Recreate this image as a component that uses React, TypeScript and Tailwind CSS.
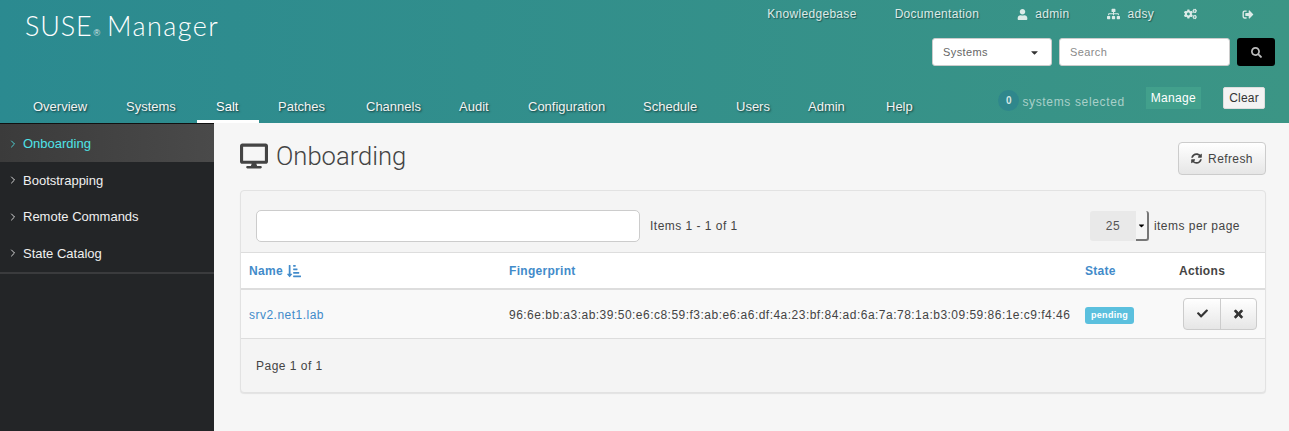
import { FaUser, FaSitemap, FaCogs, FaSignOutAlt, FaSearch, FaSyncAlt, FaCheck, FaTimes, FaDesktop, FaSortAmountDownAlt, FaCaretDown } from "react-icons/fa";
import { LuChevronRight } from "react-icons/lu";

const navItems = [
  { label: "Overview", width: "w-[93px]" },
  { label: "Systems", width: "w-[90px]" },
  { label: "Salt", width: "w-[62px]" },
  { label: "Patches", width: "w-[88px]" },
  { label: "Channels", width: "w-[93px]" },
  { label: "Audit", width: "w-[69px]" },
  { label: "Configuration", width: "w-[115px]" },
  { label: "Schedule", width: "w-[93px]" },
  { label: "Users", width: "w-[72px]" },
  { label: "Admin", width: "w-[78px]" },
  { label: "Help", width: "w-[60px]" },
];
const sideItems = ["Onboarding", "Bootstrapping", "Remote Commands", "State Catalog"];

function Header() {
  return (
    <header className="h-[123px] flex flex-col bg-gradient-to-r from-[#2b8a90] to-[#3b9585] text-white">
      <div className="flex justify-between h-[88px]">
        <div className="pl-[25px] pt-[8px] font-['Lato'] font-light text-[27px] leading-[36px] flex items-baseline">
          <span className="tracking-[0.8px]">SUSE</span>
          <span className="font-['Liberation_Sans'] text-[9px] ml-[1px] mr-[7px] opacity-80">®</span>
          <span className="tracking-[1.4px]">Manager</span>
        </div>
        <div className="flex flex-col items-end pr-[14px]">
          <div className="flex items-center h-[28px] text-[12px] tracking-[0.3px] text-[#dcebe8] [text-shadow:1px_1px_1px_rgba(0,0,0,0.4)]">
            <span className="mr-[38px]">Knowledgebase</span>
            <span className="mr-[38px]">Documentation</span>
            <FaUser className="w-[11px] h-[11px] mr-[7px]" />
            <span className="mr-[38px]">admin</span>
            <FaSitemap className="w-[13px] h-[12px] mr-[7px]" />
            <span className="mr-[30px]">adsy</span>
            <FaCogs className="w-[13px] h-[12px] mr-[45px]" />
            <FaSignOutAlt className="w-[12px] h-[11px] mr-[21px]" />
          </div>
          <div className="flex mt-[10px] h-[28px] gap-[7px] text-[11px] tracking-[0.4px] text-[#8a8a8a]">
            <div className="w-[120px] bg-white border border-[#ccc] rounded-[3px] flex items-center justify-between pl-[10px] pr-[11px]">
              <span className="text-[#666]">Systems</span>
              <FaCaretDown className="w-[11px] h-[11px] text-[#333]" />
            </div>
            <div className="w-[171px] bg-white border border-[#ccc] rounded-[3px] flex items-center pl-[10px]">Search</div>
            <div className="w-[38px] bg-black rounded-[3px] flex items-center justify-center">
              <FaSearch className="w-[11px] h-[11px] text-[#bbb]" />
            </div>
          </div>
        </div>
      </div>
      <div className="flex justify-between flex-1">
        <nav className="flex pl-[14px] text-[13px] [text-shadow:1px_1px_2px_rgba(0,0,0,0.6)]">
          {navItems.map((item) => (
            <div
              key={item.label}
              className={`${item.width} pl-[19px] pt-[9px] border-b-[3px] ${item.label === "Salt" ? "border-white text-white" : "border-transparent text-[#f0f5f4]"}`}
            >
              {item.label}
            </div>
          ))}
        </nav>
        <div className="flex items-start pr-[24px]">
          <span className="w-[21px] h-[21px] mt-[2px] rounded-full bg-[#2f878c] text-[#d5e6e4] font-bold text-[10px] flex items-center justify-center">0</span>
          <span className="ml-[3px] mt-[5px] text-[12px] tracking-[0.65px] text-[#a9d0c9]">systems selected</span>
          <span className="ml-[21px] mt-[-1px] px-[5px] h-[22px] bg-[#42a08c] text-[12px] tracking-[0.3px] flex items-center">Manage</span>
          <span className="ml-[22px] mt-[-1px] w-[42px] h-[22px] bg-[#f3f3f3] border border-[#ddd] rounded-[2px] text-[12px] tracking-[0.2px] text-[#333] flex items-center justify-center">Clear</span>
        </div>
      </div>
    </header>
  );
}

function Sidebar() {
  return (
    <aside className="w-[214px] shrink-0 bg-[#232527] border-t border-[#111] text-[13px] text-[#f0f0f0]">
      <div className="border-b-2 border-[#3a3b3d]">
        {sideItems.map((item, i) => (
          <div
            key={item}
            className={i === 0 ? "h-[38px] flex items-center pt-[1px] pl-[7px] bg-gradient-to-r from-[#3b3b3b] to-[#4a4a4a] text-[#4fe3e8]" : "h-[36.5px] flex items-center pl-[7px]"}
          >
            <LuChevronRight className="w-[12px] h-[12px] mr-[4px]" strokeWidth={1.75} />
            {item}
          </div>
        ))}
      </div>
    </aside>
  );
}

function Table() {
  return (
    <div className="border border-[#e2e2e2] rounded-[4px] bg-[#f4f4f4] shadow-[0_1px_1px_rgba(0,0,0,0.08)] text-[12px] tracking-[0.48px] text-[#444]">
      <div className="h-[62px] flex items-center pt-[9px] pl-[15px] pr-[25px] border-b border-[#ddd]">
        <div className="w-[384px] h-[32px] bg-white border border-[#ccc] rounded-[5px]" />
        <span className="ml-[10px]">Items 1 - 1 of 1</span>
        <div className="ml-auto flex items-center">
          <div className="w-[59px] h-[30px] rounded-[3px] bg-[#e9e9e9] flex">
            <span className="w-[46px] flex items-center justify-center text-[#555]">25</span>
            <div className="w-[13px] bg-[#f5f5f5] border-r-2 border-b-2 border-[#777] rounded-r-[3px] flex items-center justify-center">
              <FaCaretDown className="w-[9px] h-[9px] text-black" />
            </div>
          </div>
          <span className="ml-[5px]">items per page</span>
        </div>
      </div>
      <table className="w-full bg-white border-collapse">
        <thead>
          <tr className="h-[36px] font-bold tracking-[0.3px] text-[#428bca] border-b-2 border-[#ddd] text-left">
            <th className="w-[260px] pl-[8px]">
              <span className="flex items-center gap-[4px]">Name <FaSortAmountDownAlt className="w-[14px] h-[14px]" /></span>
            </th>
            <th className="w-[576px] pl-[8px]">Fingerprint</th>
            <th className="w-[94px] pl-[8px]">State</th>
            <th className="pl-[8px] text-[#444]">Actions</th>
          </tr>
        </thead>
        <tbody>
          <tr className="h-[49px] bg-[#f9f9f9] border-b border-[#ddd]">
            <td className="pl-[8px] pt-[2px] text-[#428bca]">srv2.net1.lab</td>
            <td className="pl-[8px] pt-[2px] whitespace-nowrap">96:6e:bb:a3:ab:39:50:e6:c8:59:f3:ab:e6:a6:df:4a:23:bf:84:ad:6a:7a:78:1a:b3:09:59:86:1e:c9:f4:46</td>
            <td className="pl-[8px] pt-[2px]">
              <span className="inline-flex items-center h-[17px] px-[6px] rounded-[3px] bg-[#5bc0de] text-white font-bold text-[9px] tracking-[0.3px]">pending</span>
            </td>
            <td className="pl-[12px]">
              <div className="flex w-[74px] h-[32px] border border-[#ccc] rounded-[4px] bg-gradient-to-b from-white to-[#e6e6e6]">
                <span className="flex-1 flex items-center justify-center border-r border-[#ccc]"><FaCheck className="w-[11px] h-[11px] text-[#333]" /></span>
                <span className="w-[35px] flex items-center justify-center"><FaTimes className="w-[11px] h-[12px] text-[#333] stroke-current stroke-[30px]" /></span>
              </div>
            </td>
          </tr>
        </tbody>
      </table>
      <div className="h-[53px] flex items-center pt-[1px] pl-[15px]">Page 1 of 1</div>
    </div>
  );
}

export default function App() {
  return (
    <div className="h-[431px] overflow-hidden flex flex-col font-['Liberation_Sans',sans-serif] bg-[#f6f6f6]">
      <Header />
      <div className="flex flex-1">
        <Sidebar />
        <main className="flex-1 pl-[26px] pr-[23px]">
          <div className="flex justify-between items-start pt-[17px] h-[67px]">
            <div className="flex items-center gap-[8px] text-[#444]">
              <FaDesktop className="w-[28px] h-[26px]" />
              <h1 className="font-['Roboto'] font-light text-[25.6px] leading-[32px]">Onboarding</h1>
            </div>
            <button className="mt-[2px] w-[88px] h-[33px] border border-[#ccc] rounded-[4px] bg-gradient-to-b from-white to-[#e6e6e6] text-[12px] tracking-[0.4px] text-[#444] flex items-center justify-center gap-[6px]">
              <FaSyncAlt className="w-[11px] h-[11px]" />
              Refresh
            </button>
          </div>
          <Table />
        </main>
      </div>
    </div>
  );
}
